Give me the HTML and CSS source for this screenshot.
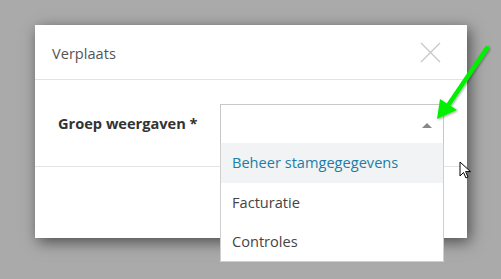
FILE: index.html
```html
<!DOCTYPE html>
<html lang="nl">
<head>
    <meta charset="UTF-8">
    <title>Verplaats</title>
    <link rel="stylesheet" href="styles.css">
</head>
<body>

    <!-- Modal -->
    <div class="modal">
        <div class="modal-header">
            <span class="modal-title">Verplaats</span>
            <span class="modal-close">
                <svg width="21" height="21" viewBox="0 0 21 21">
                    <path d="M1 1 L20 20 M20 1 L1 20" stroke="#c8c8c8" stroke-width="1.3" fill="none"/>
                </svg>
            </span>
        </div>
        <div class="modal-body">
            <label class="field-label">Groep weergaven *</label>
            <div class="select">
                <div class="select-box">
                    <span class="select-arrow"></span>
                </div>
                <ul class="select-list">
                    <li class="active">Beheer stamgegegevens</li>
                    <li>Facturatie</li>
                    <li>Controles</li>
                </ul>
            </div>
        </div>
        <div class="modal-footer"></div>
    </div>

    <!-- Annotation arrow -->
    <svg class="annotation" width="80" height="100" viewBox="0 0 80 100">
        <defs>
            <filter id="shade" x="-20%" y="-20%" width="140%" height="140%">
                <feDropShadow dx="1" dy="1" stdDeviation="1" flood-color="#000" flood-opacity="0.35"/>
            </filter>
        </defs>
        <g filter="url(#shade)">
            <path d="M65 7 L27 63" stroke="#00f000" stroke-width="4.5" stroke-linecap="round" fill="none"/>
            <path d="M15 78 L18 58 L35 69 Z" fill="#00f000"/>
        </g>
    </svg>

    <!-- Mouse cursor -->
    <svg class="cursor" width="14" height="20" viewBox="0 0 14 20">
        <path d="M1 1 L1 15 L4.5 11.5 L7 17 L9 16 L6.6 10.6 L11.5 10.6 Z" fill="#fff" stroke="#000" stroke-width="1" stroke-linejoin="round"/>
    </svg>

</body>
</html>
```

FILE: styles.css
```css
/* Global Styles */
body {
    font-family: 'Open Sans', sans-serif;
    background: #aaaaaa;
    margin: 0;
    padding: 25px 0 0 35px;
    height: 279px;
    box-sizing: border-box;
    overflow: hidden;
    position: relative;
}

/* Modal */
.modal {
    width: 432px;
    height: 213px;
    background: #fff;
    box-shadow: 3px 4px 14px rgba(0, 0, 0, 0.55);
    display: flex;
    flex-direction: column;
}

.modal-header {
    height: 55px;
    box-sizing: border-box;
    border-bottom: 1px solid #e3e3e3;
    display: flex;
    align-items: center;
    justify-content: space-between;
    padding: 0 26px 0 17px;
}

.modal-title {
    font-size: 14.6px;
    color: #555;
    margin-top: 2px;
}

.modal-close {
    display: flex;
    margin-top: 1px;
}

.modal-body {
    height: 87px;
    box-sizing: border-box;
    border-bottom: 1px solid #e3e3e3;
    display: flex;
    align-items: flex-start;
    padding: 24px 0 0 23px;
}

.field-label {
    width: 162px;
    font-size: 14.6px;
    font-weight: bold;
    color: #333;
    line-height: 39px;
}

/* Select */
.select {
    position: relative;
    width: 224px;
}

.select-box {
    height: 39px;
    box-sizing: border-box;
    border: 1px solid #c8c8c8;
    border-bottom: none;
    position: relative;
}

.select-arrow {
    position: absolute;
    right: 11px;
    top: 18px;
    width: 0;
    height: 0;
    border-left: 5px solid transparent;
    border-right: 5px solid transparent;
    border-bottom: 5px solid #888;
}

.select-list {
    position: absolute;
    top: 39px;
    left: 0;
    width: 224px;
    box-sizing: border-box;
    margin: 0;
    padding: 0;
    list-style: none;
    background: #fff;
    border: 1px solid #cfcfcf;
    border-top: none;
    z-index: 2;
}

.select-list li {
    height: 39px;
    line-height: 39px;
    padding-left: 11px;
    font-size: 14.6px;
    color: #444;
}

.select-list li.active {
    height: 40px;
    background: #f2f3f5;
    color: #1b7ea6;
}

/* Overlays */
.annotation {
    position: absolute;
    left: 422px;
    top: 41px;
    z-index: 3;
}

.cursor {
    position: absolute;
    left: 459px;
    top: 161px;
    z-index: 3;
}
```
